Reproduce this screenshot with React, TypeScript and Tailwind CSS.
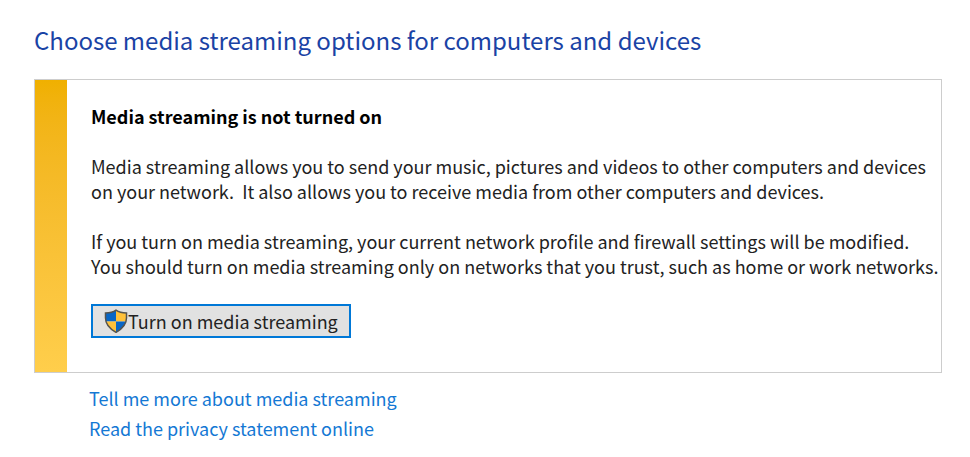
const paragraphs = [
  [
    'Media streaming allows you to send your music, pictures and videos to other computers and devices',
    'on your network.  It also allows you to receive media from other computers and devices.',
  ],
  [
    'If you turn on media streaming, your current network profile and firewall settings will be modified.',
    'You should turn on media streaming only on networks that you trust, such as home or work networks.',
  ],
];

const links = ['Tell me more about media streaming', 'Read the privacy statement online'];

const ShieldIcon = () => (
  <svg className="h-6 w-6 shrink-0" viewBox="0 0 24 24" aria-hidden="true">
    <clipPath id="shield">
      <path d="M12 1C9.500 3 5.500 4 1.500 4V9C1.500 15.500 6 20.500 12 24C18 20.500 22.500 15.500 22.500 9V4C18.500 4 14.500 3 12 1Z" />
    </clipPath>
    <g clipPath="url(#shield)">
      <path d="M0 0H12V12.500H0Z" fill="#0866c6" />
      <path d="M12 0H24V12.500H12Z" fill="#ffc13a" />
      <path d="M0 12.500H12V24H0Z" fill="#ffc13a" />
      <path d="M12 12.500H24V24H12Z" fill="#0866c6" />
    </g>
    <path
      d="M12 1.200C9.500 3 5.500 4 1.500 4V9C1.500 15.500 6 20 12 23.300C18 20 22.500 15.500 22.500 9V4C18.500 4 14.500 3 12 1.200Z"
      fill="none"
      stroke="#55544f"
      strokeWidth="1.500"
    />
  </svg>
);

export default function App() {
  return (
    <main className="min-h-screen bg-white pt-6 pr-7 pb-3 pl-[34px] font-['Noto_Sans_CJK_SC','Noto_Sans',sans-serif] text-[18px] leading-[25px] text-[#222]">
      <h1 className="text-[24px] leading-8 text-[#1a43a5]">Choose media streaming options for computers and devices</h1>
      <section className="mt-[23px] flex border border-[#cdcdcd]">
        <div className="w-8 shrink-0 bg-linear-to-b from-[#f0b000] to-[#ffce4b]" />
        <div className="pt-6 pb-[34px] pl-6">
          <h2 className="font-bold text-black">Media streaming is not turned on</h2>
          {paragraphs.map((lines) => (
            <p key={lines[0]} className="mt-[25px] whitespace-pre">
              {lines.join('\n')}
            </p>
          ))}
          <button type="button" className="mt-[25px] flex h-[34px] items-center border-2 border-[#0078d7] bg-[#e1e1e1] px-[11px]">
            <ShieldIcon />
            Turn on media streaming
          </button>
        </div>
      </section>
      <nav className="mt-[13px] flex flex-col items-start gap-[5px] pl-[55px] text-[#1478d4]">
        {links.map((link) => (
          <a key={link} href="#">
            {link}
          </a>
        ))}
      </nav>
    </main>
  );
}
